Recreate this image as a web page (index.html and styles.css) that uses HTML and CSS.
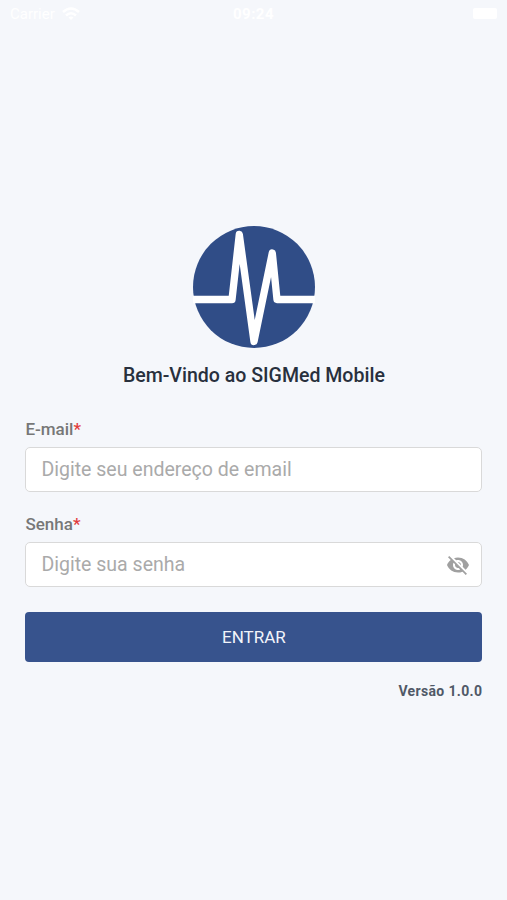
FILE: index.html
```html
<!DOCTYPE html>
<html lang="pt-BR">
<head>
<meta charset="utf-8">
<title>SIGMed Mobile</title>
<link rel="stylesheet" href="styles.css">
</head>
<body>
<header class="status">
  <div class="carrier"><span>Carrier</span>
    <svg width="18" height="14" viewBox="0 0 18 14" fill="none" stroke="#fff" stroke-width="2.6"><path d="M1 5Q9-2 17 5M4 8.500Q9 4 14 8.500"/><path d="M9 13L6.500 10.500Q9 8.500 11.500 10.500Z" fill="#fff" stroke="none"/></svg>
  </div>
  <span class="time">09:24</span>
  <div class="power"><span class="battery"></span></div>
</header>
<main class="login">
  <svg class="logo" viewBox="0 0 122 122">
    <circle cx="61" cy="61" r="61" fill="#304d87"/>
    <path d="M-4 73.500H39L46.300 8.500L61 115.500L79.300 27L84 73.500H126" fill="none" stroke="#fff" stroke-width="7.3" stroke-linejoin="round"/>
  </svg>
  <h1>Bem-Vindo ao SIGMed Mobile</h1>
  <form>
    <label for="email">E-mail<span class="required">*</span></label>
    <div class="field"><input id="email" type="email" placeholder="Digite seu endereço de email"></div>
    <label for="password">Senha<span class="required">*</span></label>
    <div class="field"><input id="password" type="password" placeholder="Digite sua senha">
      <svg class="eye" viewBox="0 0 24 24" fill="#a0a0a0"><path d="M12 7c2.760 0 5 2.240 5 5 0 .650-.130 1.260-.360 1.830l2.920 2.920c1.510-1.260 2.700-2.890 3.430-4.750-1.730-4.390-6-7.500-11-7.500-1.400 0-2.740.250-3.980.700l2.160 2.160C10.740 7.130 11.350 7 12 7zM2 4.270l2.280 2.280.460.460C3.080 8.300 1.780 10.020 1 12c1.730 4.390 6 7.500 11 7.500 1.550 0 3.030-.300 4.380-.840l.420.420L19.730 22 21 20.730 3.270 3 2 4.270zM7.530 9.800l1.550 1.550c-.050.210-.080.430-.080.650 0 1.660 1.340 3 3 3 .220 0 .440-.030.650-.080l1.550 1.550c-.670.330-1.410.530-2.200.530-2.760 0-5-2.240-5-5 0-.790.200-1.530.530-2.200zm4.310-.780l3.150 3.150.020-.160c0-1.660-1.340-3-3-3l-.170.010z"/></svg>
    </div>
    <button type="button">ENTRAR</button>
  </form>
  <p class="version">Versão 1.0.0</p>
</main>
</body>
</html>
```
FILE: styles.css
```css
* { box-sizing: border-box; }
body {
  margin: 0;
  height: 900px;
  background: #f5f7fb;
  font-family: Roboto, "Liberation Sans", sans-serif;
  overflow: hidden;
}
.status {
  display: grid;
  grid-template-columns: 1fr auto 1fr;
  align-items: center;
  height: 27px;
  padding: 0 10px;
  color: #fff;
  font-size: 15px;
}
.carrier { display: flex; align-items: center; gap: 7px; }
.time { font-weight: 700; letter-spacing: 0.5px; }
.power { display: flex; justify-content: flex-end; }
.battery { width: 24px; height: 11px; border-radius: 2px; background: #fff; }
.login {
  display: flex;
  flex-direction: column;
  padding: 198.5px 24.6px 0 25.4px;
}
.logo { width: 122px; height: 122px; align-self: center; }
h1 {
  margin: 16.5px 0 0;
  text-align: center;
  font-size: 19.55px;
  line-height: 24px;
  font-weight: 500;
  color: #28303d;
}
form { margin-top: 31px; }
label {
  display: block;
  height: 28px;
  font-size: 17px;
  line-height: 20px;
  font-weight: 500;
  color: #777;
}
.required { color: #e23b3b; }
.field {
  display: flex;
  align-items: center;
  height: 45px;
  margin-bottom: 22px;
  padding: 0 11px 0 15px;
  border: 1px solid #d9d9d9;
  border-radius: 5px;
  background: #fff;
}
input {
  flex: 1;
  min-width: 0;
  padding: 1px 0 0;
  border: 0;
  outline: 0;
  background: none;
  font: 19.55px/24px Roboto, sans-serif;
}
input::placeholder { color: #aaa; }
.eye { width: 24px; height: 24px; }
button {
  display: block;
  width: 100%;
  height: 50px;
  margin-top: 25px;
  padding: 0 0 1px;
  border: 0;
  border-radius: 4px;
  background: #37538d;
  color: #f1f4fa;
  font: 17px/20px Roboto, sans-serif;
}
.version {
  margin: 20px 0 0;
  text-align: right;
  font-size: 14px;
  line-height: 18px;
  font-weight: 700;
  letter-spacing: 0.35px;
  color: #505967;
}
```
